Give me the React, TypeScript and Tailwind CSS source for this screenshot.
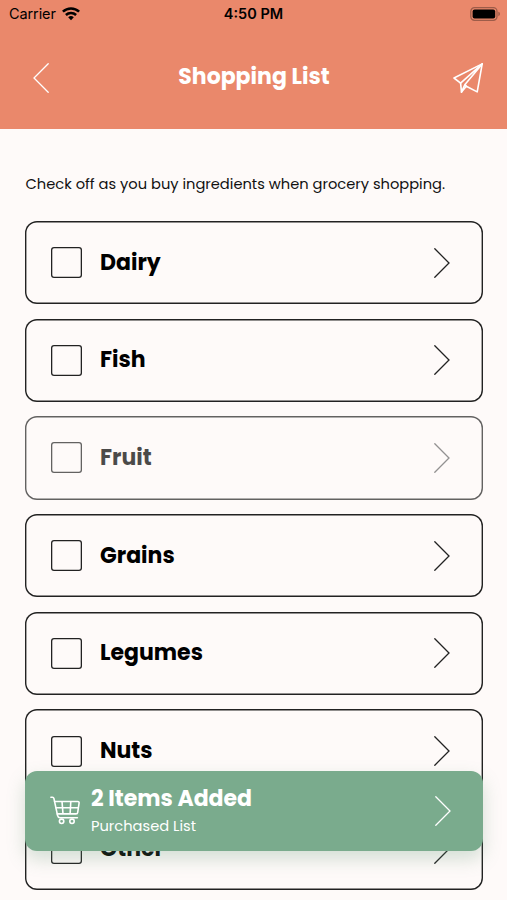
import React, { useState } from 'react';

interface Category {
    name: string;
    done?: boolean;
}

const CATEGORIES: Category[] = [
    { name: 'Dairy' },
    { name: 'Fish' },
    { name: 'Fruit', done: true },
    { name: 'Grains' },
    { name: 'Legumes' },
    { name: 'Nuts' },
    { name: 'Other' },
];

const Chevron = ({ className = '', flip = false }: { className?: string; flip?: boolean }) => (
    <svg viewBox="0 0 16 30" fill="none" stroke="currentColor" strokeWidth="1.3" strokeLinecap="round" className={`h-[30px] w-4 shrink-0 ${className}`}>
        <path d={flip ? 'M15.2 .8 1 15 15.2 29.2' : 'M.8 .8 15 15 .8 29.2'} />
    </svg>
);

const WifiIcon = () => (
    <svg viewBox="0 0 18 14" className="h-3.5 w-[18px]" fill="none" stroke="#000" strokeWidth="2.5">
        <path d="M.9 4.7a11.6 11.6 0 0 1 16.2 0" />
        <path d="M3.9 8a7.3 7.3 0 0 1 10.2 0" />
        <path d="M6.2 10.3a4.1 4.1 0 0 1 5.6 0L9 13.2z" fill="#000" stroke="none" />
    </svg>
);

const BatteryIcon = () => (
    <svg viewBox="0 0 31 14" className="-mt-px h-3.5 w-[31px]">
        <rect x=".8" y=".7" width="26.2" height="12.6" rx="3.7" fill="none" stroke="#9d5c49" strokeWidth="1.3" />
        <rect x="2.6" y="2.4" width="22.6" height="9.2" rx="2" fill="#000" />
        <path d="M28.3 4.8c2.2.6 2.2 3.8 0 4.4z" fill="#9d5c49" />
    </svg>
);

const PlaneIcon = () => (
    <svg viewBox="0 0 30 30" className="h-[30px] w-[30px]" fill="none" stroke="#fff" strokeWidth="1.6" strokeLinejoin="round" strokeLinecap="round">
        <path d="M29.2 .9 1 15l6.6 5.2.9 8.9 4.8-5.8 10.9 5.6z" />
        <path d="M29.2 .9 7.6 20.2M29.2 .9 12 21.4 8.5 29.1M12 21.4l1.3 1.9" />
    </svg>
);

const CartIcon = () => (
    <svg viewBox="0 0 30 29" className="h-[29px] w-[30px] shrink-0" fill="none" stroke="#fff" strokeWidth="1.6" strokeLinejoin="round" strokeLinecap="round">
        <path d="M.9 1.2h1.6c.9 0 1.2.4 1.4 1.2L7.6 19.6c.3 1.4 1 2.1 2.4 2.1h17.4" />
        <path d="M4.6 5.5h23.2c1 0 1.4.6 1.3 1.5l-1.4 9.3c-.1 1-.8 1.6-1.8 1.6H7.3M6 11.8h22.4M12 5.5l1 12.4M20.8 5.5l-.7 12.4" />
        <circle cx="11.6" cy="25.3" r="2.2" />
        <circle cx="22" cy="25.3" r="2.2" />
    </svg>
);

const CategoryCard = ({ category }: { category: Category }) => {
    const [checked, setChecked] = useState(false);

    return (
        <div className={`flex h-[83.2px] shrink-0 items-center rounded-[12px] pl-[26px] pr-[33px] shadow-[inset_0_0_0_1.4px_#222] ${category.done ? 'opacity-70' : ''}`}>
            <button
                aria-label={category.name}
                aria-pressed={checked}
                onClick={() => setChecked(!checked)}
                className={`h-[31px] w-[31px] rounded-[3px] shadow-[inset_0_0_0_1.3px_#222] ${checked ? 'bg-[#7aab8d]' : ''}`}
            />
            <span className="ml-[18px] whitespace-nowrap text-[22px] font-bold leading-[30px] text-black">{category.name}</span>
            <Chevron className={`ml-auto ${category.done ? 'text-[#666]' : 'text-[#222]'}`} />
        </div>
    );
};

const App = () => {
    return (
        <div className="relative flex h-[900px] w-full flex-col overflow-hidden bg-[#fefaf9] font-['Poppins','Inter',sans-serif]">
            <header className="flex h-[128.5px] shrink-0 flex-col bg-[#ea886b]">
                <div className="grid h-7 grid-cols-3 items-center pl-[9px] pr-[6px] font-['Inter',sans-serif] text-[14.5px] text-black">
                    <div className="flex items-center gap-[6px]">
                        <span className="tracking-[-0.1px]">Carrier</span>
                        <WifiIcon />
                    </div>
                    <span className="pr-[3px] text-center font-semibold">4:50 PM</span>
                    <div className="flex justify-end">
                        <BatteryIcon />
                    </div>
                </div>
                <div className="mt-[33.5px] flex h-8 items-center justify-between pl-[33px] pr-[24px]">
                    <Chevron flip className="text-white" />
                    <h1 className="whitespace-nowrap pb-[2px] pl-[6px] text-[22px] font-bold text-white">Shopping List</h1>
                    <PlaneIcon />
                </div>
            </header>

            <main className="flex flex-col pl-[25px] pr-[24px] pt-[45.5px]">
                <p className="whitespace-nowrap pl-[0.5px] text-[14.67px] leading-5 text-[#111]">Check off as you buy ingredients when grocery shopping.</p>
                <div className="mt-[27px] flex flex-col gap-[14.5px]">
                    {CATEGORIES.map((category) => (
                        <CategoryCard key={category.name} category={category} />
                    ))}
                </div>
            </main>

            <div className="absolute left-[25px] right-[24px] top-[770.6px] flex h-[80.7px] items-center rounded-[12px] bg-[#7aab8d] pl-[25px] pr-[32px] text-white shadow-[0_8px_18px_rgba(100,150,120,0.28)]">
                <CartIcon />
                <div className="ml-[11px] flex flex-col pt-[2px]">
                    <span className="whitespace-nowrap text-[22px] font-bold leading-[30px]">2 Items Added</span>
                    <span className="whitespace-nowrap text-[14.67px] leading-[25px]">Purchased List</span>
                </div>
                <Chevron className="ml-auto" />
            </div>
        </div>
    );
};

export default App;
